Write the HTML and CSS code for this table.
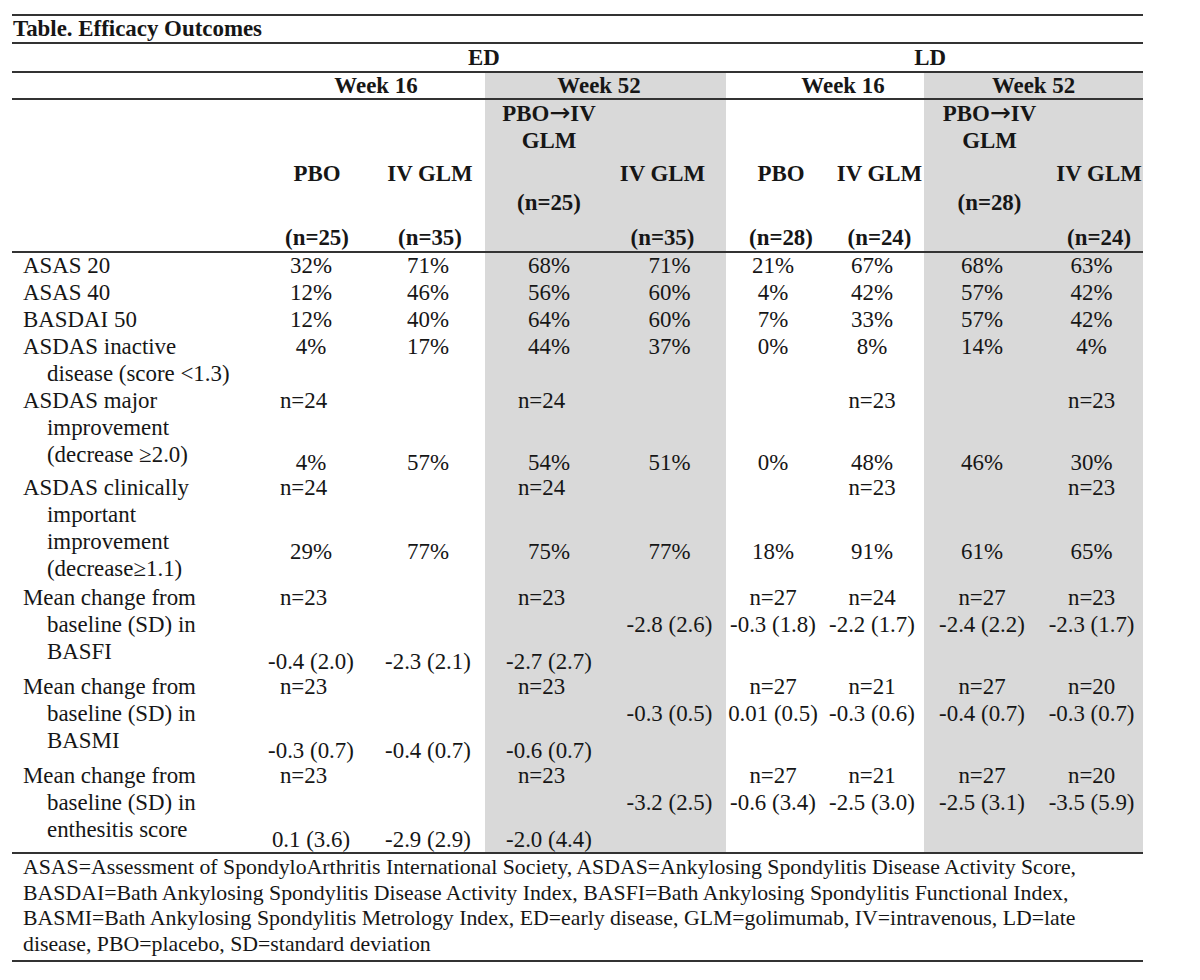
FILE: index.html
```html
<!DOCTYPE html>
<html>
<head>
<meta charset="utf-8">
<link rel="stylesheet" href="styles.css">
</head>
<body>
<table class="tbl">
  <colgroup>
    <col class="c0"><col class="c1"><col class="c2"><col class="c3"><col class="c4"><col class="c5"><col class="c6"><col class="c7"><col class="c8">
  </colgroup>
  <tr class="r-title">
    <td colspan="9" class="title ln">Table. Efficacy Outcomes</td>
  </tr>
  <tr class="r-grp">
    <td class="ln"></td>
    <td colspan="4" class="grp ln">ED</td>
    <td colspan="4" class="grp ln">LD</td>
  </tr>
  <tr class="r-wk">
    <td class="ln"></td>
    <td colspan="2" class="wk ln wk16e">Week 16</td>
    <td colspan="2" class="wk ln sh wk52e">Week 52</td>
    <td colspan="2" class="wk ln wk16l">Week 16</td>
    <td colspan="2" class="wk ln sh">Week 52</td>
  </tr>
  <tr class="r-head">
    <td class="ln"></td>
    <td class="hd ln hr12"><div class="h1">PBO</div><div class="h2">(n=25)</div></td>
    <td class="hd ln hr4"><div class="h1">IV GLM</div><div class="h2">(n=35)</div></td>
    <td class="hd ln sh"><div class="t1">PBO<span class="arr">→</span>IV</div><div>GLM</div><div class="t3">(n=25)</div></td>
    <td class="hd ln sh hl14"><div class="h1">IV GLM</div><div class="h2">(n=35)</div></td>
    <td class="hd ln hr16"><div class="h1">PBO</div><div class="h2">(n=28)</div></td>
    <td class="hd ln hr15"><div class="h1">IV GLM</div><div class="h2">(n=24)</div></td>
    <td class="hd ln sh hr15"><div class="t1">PBO<span class="arr">→</span>IV</div><div>GLM</div><div class="t3">(n=28)</div></td>
    <td class="hd ln sh hr15"><div class="h1">IV GLM</div><div class="h2">(n=24)</div></td>
  </tr>

  <tr class="r1">
    <td class="lab">ASAS 20</td>
    <td class="d">32%</td><td class="d">71%</td><td class="d sh">68%</td><td class="d sh">71%</td>
    <td class="d">21%</td><td class="d">67%</td><td class="d sh">68%</td><td class="d sh">63%</td>
  </tr>
  <tr class="r1">
    <td class="lab">ASAS 40</td>
    <td class="d">12%</td><td class="d">46%</td><td class="d sh">56%</td><td class="d sh">60%</td>
    <td class="d">4%</td><td class="d">42%</td><td class="d sh">57%</td><td class="d sh">42%</td>
  </tr>
  <tr class="r1">
    <td class="lab">BASDAI 50</td>
    <td class="d">12%</td><td class="d">40%</td><td class="d sh">64%</td><td class="d sh">60%</td>
    <td class="d">7%</td><td class="d">33%</td><td class="d sh">57%</td><td class="d sh">42%</td>
  </tr>
  <tr class="r2">
    <td class="lab">ASDAS inactive<br>disease (score &lt;1.3)</td>
    <td class="d">4%</td><td class="d">17%</td><td class="d sh">44%</td><td class="d sh">37%</td>
    <td class="d">0%</td><td class="d">8%</td><td class="d sh">14%</td><td class="d sh">4%</td>
  </tr>
  <tr class="r5">
    <td class="lab">ASDAS major<br>improvement<br>(decrease ≥2.0)</td>
    <td class="d"><div class="n ne">n=24</div><div class="v low">4%</div></td>
    <td class="d"><div class="n"></div><div class="v low">57%</div></td>
    <td class="d sh"><div class="n ne">n=24</div><div class="v low">54%</div></td>
    <td class="d sh"><div class="n"></div><div class="v low">51%</div></td>
    <td class="d"><div class="n"></div><div class="v low">0%</div></td>
    <td class="d"><div class="n">n=23</div><div class="v low">48%</div></td>
    <td class="d sh"><div class="n"></div><div class="v low">46%</div></td>
    <td class="d sh"><div class="n">n=23</div><div class="v low">30%</div></td>
  </tr>
  <tr class="r6">
    <td class="lab">ASDAS clinically<br>important<br>improvement<br>(decrease≥1.1)</td>
    <td class="d"><div class="n ne">n=24</div><div class="v low">29%</div></td>
    <td class="d"><div class="n"></div><div class="v low">77%</div></td>
    <td class="d sh"><div class="n ne">n=24</div><div class="v low">75%</div></td>
    <td class="d sh"><div class="n"></div><div class="v low">77%</div></td>
    <td class="d"><div class="n"></div><div class="v low">18%</div></td>
    <td class="d"><div class="n">n=23</div><div class="v low">91%</div></td>
    <td class="d sh"><div class="n"></div><div class="v low">61%</div></td>
    <td class="d sh"><div class="n">n=23</div><div class="v low">65%</div></td>
  </tr>
  <tr class="r7">
    <td class="lab">Mean change from<br>baseline (SD) in<br>BASFI</td>
    <td class="d"><div class="n ne">n=23</div><div class="v low">-0.4 (2.0)</div></td>
    <td class="d"><div class="n"></div><div class="v low">-2.3 (2.1)</div></td>
    <td class="d sh"><div class="n ne">n=23</div><div class="v low">-2.7 (2.7)</div></td>
    <td class="d sh"><div class="n"></div><div class="v">-2.8 (2.6)</div></td>
    <td class="d"><div class="n">n=27</div><div class="v">-0.3 (1.8)</div></td>
    <td class="d"><div class="n">n=24</div><div class="v">-2.2 (1.7)</div></td>
    <td class="d sh"><div class="n">n=27</div><div class="v">-2.4 (2.2)</div></td>
    <td class="d sh"><div class="n">n=23</div><div class="v">-2.3 (1.7)</div></td>
  </tr>
  <tr class="r7">
    <td class="lab">Mean change from<br>baseline (SD) in<br>BASMI</td>
    <td class="d"><div class="n ne">n=23</div><div class="v low">-0.3 (0.7)</div></td>
    <td class="d"><div class="n"></div><div class="v low">-0.4 (0.7)</div></td>
    <td class="d sh"><div class="n ne">n=23</div><div class="v low">-0.6 (0.7)</div></td>
    <td class="d sh"><div class="n"></div><div class="v">-0.3 (0.5)</div></td>
    <td class="d"><div class="n">n=27</div><div class="v">0.01 (0.5)</div></td>
    <td class="d"><div class="n">n=21</div><div class="v">-0.3 (0.6)</div></td>
    <td class="d sh"><div class="n">n=27</div><div class="v">-0.4 (0.7)</div></td>
    <td class="d sh"><div class="n">n=20</div><div class="v">-0.3 (0.7)</div></td>
  </tr>
  <tr class="r9">
    <td class="lab ln">Mean change from<br>baseline (SD) in<br>enthesitis score</td>
    <td class="d ln"><div class="n ne">n=23</div><div class="v low">0.1 (3.6)</div></td>
    <td class="d ln"><div class="n"></div><div class="v low">-2.9 (2.9)</div></td>
    <td class="d ln sh"><div class="n ne">n=23</div><div class="v low">-2.0 (4.4)</div></td>
    <td class="d ln sh"><div class="n"></div><div class="v">-3.2 (2.5)</div></td>
    <td class="d ln"><div class="n">n=27</div><div class="v">-0.6 (3.4)</div></td>
    <td class="d ln"><div class="n">n=21</div><div class="v">-2.5 (3.0)</div></td>
    <td class="d ln sh"><div class="n">n=27</div><div class="v">-2.5 (3.1)</div></td>
    <td class="d ln sh"><div class="n">n=20</div><div class="v">-3.5 (5.9)</div></td>
  </tr>
  <tr class="r-foot">
    <td colspan="9" class="foot ln">ASAS=Assessment of SpondyloArthritis International Society, ASDAS=Ankylosing Spondylitis Disease Activity Score,<br>BASDAI=Bath Ankylosing Spondylitis Disease Activity Index, BASFI=Bath Ankylosing Spondylitis Functional Index,<br>BASMI=Bath Ankylosing Spondylitis Metrology Index, ED=early disease, GLM=golimumab, IV=intravenous, LD=late<br>disease, PBO=placebo, SD=standard deviation</td>
  </tr>
</table>
</body>
</html>
```

FILE: styles.css
```css
html, body {
  margin: 0;
  background: #ffffff;
}
body {
  font-family: "Liberation Serif", "Times New Roman", serif;
  color: #161616;
}
.tbl {
  border-collapse: separate;
  border-spacing: 0;
  table-layout: fixed;
  width: 1131px;
  margin: 14px 0 0 12px;
  border-top: 2px solid #333333;
  font-size: 22.9px;
  line-height: 26.7px;
}
.c0 { width: 239px; }
.c1 { width: 120px; }
.c2 { width: 114px; }
.c3 { width: 128px; }
.c4 { width: 113px; }
.c5 { width: 94px; }
.c6 { width: 104px; }
.c7 { width: 116px; }
.c8 { width: 103px; }

.tbl td {
  padding: 0;
  vertical-align: top;
  white-space: nowrap;
}
.tbl td.ln {
  border-bottom: 2px solid #333333;
}
.sh {
  background: #d9d9d9;
}

.r-title { height: 28px; }
.title {
  font-weight: bold;
  line-height: 26px;
  padding-left: 1px !important;
}
.r-grp { height: 29px; }
.grp {
  font-weight: bold;
  text-align: center;
  line-height: 27px;
  padding-right: 9px !important;
}
.r-wk { height: 27px; }
.wk {
  font-weight: bold;
  text-align: center;
  line-height: 25px;
}
.wk16e { padding-left: 16px !important; }
.wk52e { padding-right: 13px !important; }
.wk16l { padding-left: 36px !important; }

.r-head { height: 153px; }
.hd {
  font-weight: bold;
  text-align: center;
}
.h1 { margin-top: 61px; }
.h2 { margin-top: 37px; }
.t1 { margin-top: 1px; }
.t3 { margin-top: 36px; }
.arr {
  font-family: "DejaVu Sans", sans-serif;
  font-weight: normal;
  font-size: 25px;
  line-height: 0;
}
.hr12 { padding-left: 12px !important; }
.hr4 { padding-left: 4px !important; }
.hl14 { padding-right: 14px !important; }
.hr16 { padding-left: 16px !important; }
.hr15 { padding-left: 15px !important; }

.r1 { height: 27px; }
.r2 { height: 54px; }
.r5 { height: 87px; }
.r6 { height: 110px; }
.r7 { height: 89px; }
.r9 { height: 91px; }

.lab {
  padding-left: 35px !important;
  text-indent: -24px;
}
.d {
  text-align: center;
}
.n {
  height: 26.7px;
}
.ne {
  padding-right: 15px;
}
.v.low {
  margin-top: 38px;
  line-height: 24px;
}
.r5 .v.low {
  margin-top: 36px;
}

.r-foot { height: 108px; }
.foot {
  padding: 1px 0 0 11px !important;
  font-size: 21.8px;
  line-height: 25.5px;
}
```
